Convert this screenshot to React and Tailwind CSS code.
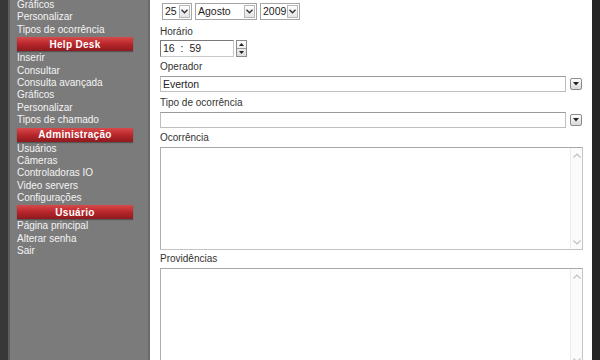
import React from "react";

const font = { fontFamily: '"Liberation Sans", Arial, sans-serif' };

function MenuItem({ children }) {
  return <div className="h-[12.4px] leading-[12.4px] pl-[7px] text-[10px] text-[#f4f4f4]">{children}</div>;
}

function MenuHeader({ children }) {
  return (
    <div className="ml-[7px] w-[116px] h-[14px] my-[1px] flex items-center justify-center text-[10px] font-bold text-white tracking-[0.3px] bg-gradient-to-b from-[#d8494c] via-[#b8262b] to-[#8e1a1e] shadow-[0_1px_1px_rgba(0,0,0,0.3)]">
      {children}
    </div>
  );
}

function Chevron() {
  return (
    <svg width="7" height="5" viewBox="0 0 7 5">
      <path d="M0.5 0.8 L3.5 3.8 L6.5 0.8" fill="none" stroke="#333" strokeWidth="1.4" />
    </svg>
  );
}

function SmallSelect({ value, width }) {
  return (
    <div className="flex h-[17px] border border-[#a5a5a5] bg-white" style={{ width }}>
      <div className="flex-1 pl-[2px] text-[10.5px] leading-[15px] text-[#222]">{value}</div>
      <div className="w-[11px] m-[1px] flex items-center justify-center border border-[#b8b8b8] bg-gradient-to-b from-white to-[#e4e4e4]">
        <Chevron />
      </div>
    </div>
  );
}

function WideSelect({ value }) {
  return (
    <div className="flex items-center h-[17px] mr-[10px]">
      <div className="flex-1 h-[16px] border border-[#bdbdbd] border-t-[#9a9a9a] bg-white pl-[2px] text-[10.5px] leading-[14px] text-[#222]">
        {value}
      </div>
      <div className="ml-[4px] w-[12px] h-[12px] flex items-center justify-center border border-[#8a8a8a] rounded-[2px] bg-gradient-to-b from-white to-[#d8d8d8]">
        <svg width="6" height="4" viewBox="0 0 6 4">
          <path d="M0 0 H6 L3 3.5 Z" fill="#222" />
        </svg>
      </div>
    </div>
  );
}

function ScrollArrow({ up }) {
  return (
    <div className="h-[14px] flex items-center justify-center">
      <svg width="8" height="5" viewBox="0 0 8 5">
        <path d={up ? "M0.5 4.5 L4 1 L7.5 4.5" : "M0.5 0.5 L4 4 L7.5 0.5"} fill="none" stroke="#b9c2cc" strokeWidth="1.2" />
      </svg>
    </div>
  );
}

function TextArea({ height }) {
  return (
    <div className="flex mr-[9px] border border-[#c4c4c4] border-t-[#a8a8a8] border-l-[#b0b0b0] bg-white" style={{ height }}>
      <div className="flex-1" />
      <div className="w-[12px] flex flex-col justify-between border-l border-[#ececec] bg-[#fbfbfb]">
        <ScrollArrow up />
        <ScrollArrow />
      </div>
    </div>
  );
}

function Label({ children, className = "" }) {
  return <div className={`text-[10px] leading-[12px] text-[#333] ${className}`}>{children}</div>;
}

export default function App() {
  return (
    <div className="flex w-[600px] h-[360px] overflow-hidden bg-[#2b2b2b]" style={font}>
      <div className="w-[8px] bg-[#383838]" />
      <div className="w-[2px] bg-[#5e5e5e]" />
      {/* Sidebar */}
      <div className="w-[138px] bg-[#7b7b7b]">
        <div className="-mt-[1px]">
          <MenuItem>Gráficos</MenuItem>
          <MenuItem>Personalizar</MenuItem>
          <MenuItem>Tipos de ocorrência</MenuItem>
          <MenuHeader>Help Desk</MenuHeader>
          <MenuItem>Inserir</MenuItem>
          <MenuItem>Consultar</MenuItem>
          <MenuItem>Consulta avançada</MenuItem>
          <MenuItem>Gráficos</MenuItem>
          <MenuItem>Personalizar</MenuItem>
          <MenuItem>Tipos de chamado</MenuItem>
          <MenuHeader>Administração</MenuHeader>
          <MenuItem>Usuários</MenuItem>
          <MenuItem>Câmeras</MenuItem>
          <MenuItem>Controladoras IO</MenuItem>
          <MenuItem>Video servers</MenuItem>
          <MenuItem>Configurações</MenuItem>
          <MenuHeader>Usuário</MenuHeader>
          <MenuItem>Página principal</MenuItem>
          <MenuItem>Alterar senha</MenuItem>
          <MenuItem>Sair</MenuItem>
        </div>
      </div>
      <div className="w-[2px] bg-[#6a6a6a]" />
      {/* Main */}
      <div className="w-[442px] bg-white pl-[10px] pt-[3px]">
        <div className="flex gap-[3px] pl-[2px]">
          <SmallSelect value="25" width={30} />
          <SmallSelect value="Agosto" width={62} />
          <SmallSelect value="2009" width={40} />
        </div>
        <Label className="mt-[6px]">Horário</Label>
        <div className="flex items-center mt-[1px] h-[18px]">
          <div className="w-[74px] h-[17px] border border-[#7a7a7a] border-r-[#c8c8c8] border-b-[#c8c8c8] pl-[2px] text-[10.5px] leading-[15px] text-[#222]">
            16 <span className="mx-[3px]">:</span> 59
          </div>
          <div className="ml-[2px] w-[11px] h-[17px] flex flex-col border border-[#8a8a8a] bg-gradient-to-b from-white to-[#dcdcdc]">
            <div className="flex-1 flex items-center justify-center border-b border-[#9a9a9a]">
              <svg width="5" height="3" viewBox="0 0 5 3"><path d="M0 3 L2.5 0 L5 3 Z" fill="#222" /></svg>
            </div>
            <div className="flex-1 flex items-center justify-center">
              <svg width="5" height="3" viewBox="0 0 5 3"><path d="M0 0 L2.5 3 L5 0 Z" fill="#222" /></svg>
            </div>
          </div>
        </div>
        <Label className="mt-[4px]">Operador</Label>
        <div className="mt-[2px]">
          <WideSelect value="Everton" />
        </div>
        <Label className="mt-[5px]">Tipo de ocorrência</Label>
        <div className="mt-[2px]">
          <WideSelect value="" />
        </div>
        <Label className="mt-[4px]">Ocorrência</Label>
        <div className="mt-[3px]">
          <TextArea height={103} />
        </div>
        <Label className="mt-[3px]">Providências</Label>
        <div className="mt-[3px]">
          <TextArea height={100} />
        </div>
      </div>
      <div className="flex-1 bg-[#262626]" />
    </div>
  );
}
